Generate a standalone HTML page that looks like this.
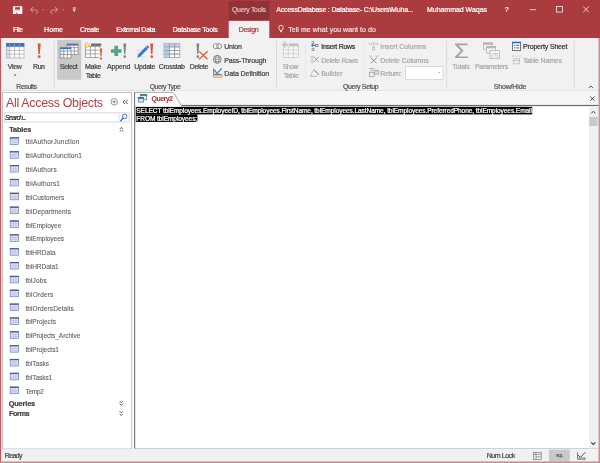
<!DOCTYPE html>
<html><head><meta charset="utf-8"><title>Access - Query2</title>
<style>
*{box-sizing:border-box;margin:0;padding:0}
html,body{width:600px;height:463px;overflow:hidden;background:#fff}
body{font-family:"Liberation Sans",sans-serif;position:relative}
.t{position:absolute;white-space:pre;line-height:1.117;display:block;-webkit-text-stroke:0.22px}
.a{position:absolute}
svg{position:absolute;left:0;top:0}
</style></head><body>
<svg width="600" height="463" viewBox="0 0 600 463">
<rect x="0" y="0" width="600" height="463" fill="#ffffff"/>
<rect x="0" y="0" width="600" height="38.2" fill="#aa3c40"/>
<rect x="228.7" y="1" width="40.6" height="20" fill="#8e3338"/>
<rect x="0" y="38" width="600" height="52.3" fill="#f1f1f1"/>
<rect x="228.7" y="20.8" width="40.6" height="17.7" fill="#f1f1f1"/>
<rect x="0" y="90" width="600" height="0.8" fill="#d9d9d9"/>
<rect x="57.2" y="39.8" width="24" height="40" fill="#c9c9c9"/>
<rect x="2.5" y="92.4" width="129.2" height="356.6" fill="#ffffff" stroke="#b4b4b4" stroke-width="0.8"/>
<rect x="4.6" y="112.8" width="124.6" height="9.2" fill="#ffffff" stroke="#d0d0d0" stroke-width="0.8"/>
<rect x="118.8" y="113.4" width="0.7" height="8" fill="#d8d8d8"/>
<rect x="134.2" y="90.8" width="464.5" height="14.2" fill="#f6f6f6"/>
<rect x="134.1" y="92.2" width="1.1" height="356.7" fill="#6e6e6e"/>
<rect x="135.2" y="104.9" width="463.5" height="1.2" fill="#6a6a6a"/>
<rect x="134.2" y="448.2" width="464.5" height="0.8" fill="#c4c4c4"/>
<rect x="135.8" y="106.8" width="396.4" height="7.6" fill="#000"/>
<rect x="135.8" y="114.3" width="61.6" height="7.6" fill="#000"/>
<rect x="589" y="106.3" width="9" height="342" fill="#f0f0f0"/>
<rect x="589.3" y="116.8" width="8.3" height="9.2" fill="#c9c9c9"/>
<rect x="405.6" y="66.6" width="37.4" height="12.8" fill="#ffffff" stroke="#d2d2d2" stroke-width="0.8"/>
<rect x="0" y="449.2" width="600" height="13" fill="#f1f1f1"/>
<rect x="549" y="449.6" width="20.7" height="12" fill="#c9c9c9"/>
<rect x="0" y="38" width="1" height="425" fill="#b85c60"/>
<rect x="1" y="38" width="0.5" height="425" fill="#ecd0d1"/>
<rect x="598.5" y="38" width="1.5" height="425" fill="#cd8c8f"/>
<rect x="0" y="461.5" width="600" height="1.5" fill="#cb8a8d"/>
<rect x="53.800000000000004" y="40.5" width="0.8" height="47.3" fill="#d6d6d6"/>
<rect x="276.20000000000005" y="40.5" width="0.8" height="47.3" fill="#d6d6d6"/>
<rect x="446.3" y="40.5" width="0.8" height="47.3" fill="#d6d6d6"/>
<rect x="573.8000000000001" y="40.5" width="0.8" height="47.3" fill="#d6d6d6"/>
<rect x="305.20000000000005" y="41" width="0.8" height="37" fill="#e7e7e7"/>
<rect x="363.8" y="41" width="0.8" height="37" fill="#e7e7e7"/>
<rect x="12.9" y="6.3" width="9.4" height="7.8" rx="0.6" fill="#fff"/><rect x="15.1" y="7.2" width="5" height="2.4" fill="#a83a3e"/><rect x="14" y="10.4" width="7.2" height="0.7" fill="#e6c4c5"/><rect x="16.2" y="12.6" width="1" height="1.5" fill="#a83a3e"/>
<g fill="none" stroke="#c98d8f" stroke-width="1.05" stroke-linecap="round" stroke-linejoin="round"><path d="M33 7.2l-2.5 2.5 2.6 2.2"/><path d="M30.9 9.7h3.6q2.9 0 2.9 2.3 0 1.1-1.2 1.6"/></g>
<g fill="none" stroke="#c98d8f" stroke-width="1.05" stroke-linecap="round" stroke-linejoin="round"><path d="M55.2 7.2l2.5 2.5-2.6 2.2"/><path d="M57.3 9.7h-3.6q-2.9 0-2.9 2.3 0 1.1 1.2 1.6"/></g>
<path d="M42.2 9.3h2.2l-1.1 1.4z" fill="#c98d8f"/><path d="M62.5 9.3h2.2l-1.1 1.4z" fill="#c98d8f"/>
<path d="M72.8 7.6h2.9v0.9h-2.9zM72.8 9.6h2.9l-1.45 2.4z" fill="#fff"/>
<rect x="530" y="9.3" width="5.8" height="0.85" fill="#f6e4e4"/>
<rect x="556.5" y="6.5" width="6" height="5.6" fill="none" stroke="#f6e4e4" stroke-width="0.85"/>
<path d="M583.2 6.5l5.6 5.7M588.8 6.5l-5.6 5.7" stroke="#f6e4e4" stroke-width="0.85" fill="none"/>
<g fill="none" stroke="#fff" stroke-width="0.8"><path d="M279.9 30.4c0-1.2-1.2-1.4-1.2-2.8a2.3 2.3 0 0 1 4.6 0c0 1.4-1.2 1.6-1.2 2.8z"/><path d="M280 31.6h2.1" stroke-width="0.9"/></g>
<rect x="6.4" y="43.3" width="17.6" height="14.700000000000003" fill="#fff"/><rect x="6.4" y="43.3" width="3.5" height="14.700000000000003" fill="#dfe6ee"/><path d="M9.9 46.599999999999994V58M14.6 46.599999999999994V58M19.3 46.599999999999994V58M6.4 46.6H24M6.4 50.4H24M6.4 54.2H24" stroke="#9a9a9a" stroke-width="0.6" fill="none"/><rect x="6.4" y="43.3" width="17.6" height="14.700000000000003" fill="none" stroke="#9a9a9a" stroke-width="0.6"/>
<rect x="6.1" y="43" width="18.2" height="3.6" fill="#3f73b4"/>
<path d="M9.9 43.6v2.4M14.6 43.6v2.4M19.3 43.6v2.4" stroke="#9bb9dd" stroke-width="0.7"/>
<path d="M13.8 74.6h2.6l-1.3 1.6z" fill="#555"/>
<path d="M37.6 43.5h3.1l-0.8680000000000001 10.439h-1.364z" fill="#d9583a"/><rect x="37.848" y="55.369" width="2.604" height="2.4310000000000005" fill="#d9583a"/>
<rect x="66.9" y="43.9" width="11.099999999999994" height="10.600000000000001" fill="#fff"/><rect x="66.9" y="43.9" width="3.6999999999999886" height="10.600000000000001" fill="#e6ebf2"/><rect x="66.9" y="43.9" width="11.099999999999994" height="1.7" fill="#3f73b4"/><path d="M70.6 45.6V54.5M74.3 45.6V54.5M66.9 47.6H78M66.9 51H78" stroke="#808080" stroke-width="0.7" fill="none"/><rect x="66.9" y="43.9" width="11.099999999999994" height="10.600000000000001" fill="none" stroke="#808080" stroke-width="0.7"/>
<rect x="60.1" y="47.3" width="10.899999999999999" height="10.700000000000003" fill="#fff"/><rect x="60.1" y="47.3" width="3.6999999999999957" height="10.700000000000003" fill="#e6ebf2"/><rect x="60.1" y="47.3" width="10.899999999999999" height="1.8" fill="#3f73b4"/><path d="M63.8 49.099999999999994V58M67.4 49.099999999999994V58M60.1 51H71M60.1 54.5H71" stroke="#808080" stroke-width="0.7" fill="none"/><rect x="60.1" y="47.3" width="10.899999999999999" height="10.700000000000003" fill="none" stroke="#808080" stroke-width="0.7"/>
<rect x="85.6" y="46.6" width="14.400000000000006" height="10.899999999999999" fill="#fff"/><path d="M90.4 46.6V57.5M95.2 46.6V57.5M85.6 50.2H100M85.6 53.9H100" stroke="#858585" stroke-width="0.7" fill="none"/><rect x="85.6" y="46.6" width="14.400000000000006" height="10.899999999999999" fill="none" stroke="#858585" stroke-width="0.7"/>
<rect x="91" y="43.5" width="10.2" height="2.4" fill="#6f6f6f"/>
<g stroke="#eebf3c" stroke-width="0.9"><path d="M87.1 42.4v5.8M84.2 45.3h5.8M85 43.2l4.2 4.2M89.2 43.2l-4.2 4.2"/></g><circle cx="87.1" cy="45.3" r="1.7" fill="#fbe9a6" stroke="#eebf3c" stroke-width="0.6"/>
<rect x="99.2" y="48" width="3.4" height="12" fill="#f1f1f1"/>
<path d="M99.9 48.6h2.3l-0.644 7.957h-1.012z" fill="#d9583a"/><rect x="100.08400000000002" y="57.647000000000006" width="1.9319999999999997" height="1.8530000000000002" fill="#d9583a"/>
<path d="M114.4 45.8h3.6v3.4h3.5v3.5h-3.5v3.4h-3.6v-3.4h-3.5v-3.5h3.5z" fill="#4ea58c"/>
<path d="M123.3 43.5h2.9l-0.812 10.439h-1.276z" fill="#858585"/><rect x="123.532" y="55.369" width="2.436" height="2.4310000000000005" fill="#858585"/>
<path d="M136.6 50.2h7M136.6 53.4h5M138 56.8h7" stroke="#cdd6e2" stroke-width="0.9"/>
<path d="M147.2 45.2l2.2 2.1-9 9.2-3.2 1.2 1-3.3z" fill="#3c78c3"/>
<path d="M145.8 46.6l2.2 2.1" stroke="#dfe9f6" stroke-width="0.6"/>
<path d="M150.2 43.5h3.0l-0.8400000000000001 10.439h-1.32z" fill="#d9583a"/><rect x="150.44" y="55.369" width="2.52" height="2.4310000000000005" fill="#d9583a"/>
<rect x="164" y="43.3" width="15.800000000000011" height="14.200000000000003" fill="#fff"/><path d="M169.5 43.3V57.5M174.6 43.3V57.5M164 46.9H179.8M164 50.5H179.8M164 54H179.8" stroke="#8b93a1" stroke-width="0.7" fill="none"/><rect x="164" y="43.3" width="15.800000000000011" height="14.200000000000003" fill="none" stroke="#8b93a1" stroke-width="0.7"/>
<rect x="164.3" y="43.6" width="5.2" height="13.6" fill="#b9cce5"/><rect x="164.3" y="43.6" width="15.2" height="3.3" fill="#b9cce5"/>
<path d="M169.5 43.3v14.2M174.6 43.3v14.2M164 46.9h15.8M164 50.5h15.8M164 54h15.8" stroke="#8b93a1" stroke-width="0.6" fill="none"/>
<path d="M196.4 43.5h2.9l-0.812 10.439h-1.276z" fill="#858585"/><rect x="196.632" y="55.369" width="2.436" height="2.4310000000000005" fill="#858585"/>
<path d="M199.2 51.4l8.3 7.8M207.6 51.2l-8.6 8.2" stroke="#d9583a" stroke-width="1.3" fill="none"/>
<g fill="#fff" stroke="#707070" stroke-width="0.75"><circle cx="215.8" cy="46.2" r="2.55"/><circle cx="219.1" cy="46.2" r="2.55" fill="none"/></g>
<g fill="none" stroke="#6a6a6a" stroke-width="0.7"><circle cx="217.3" cy="59.3" r="4" fill="#fff"/><ellipse cx="217.3" cy="59.3" rx="1.8" ry="4"/><path d="M213.3 59.3h8M214 57.2h6.6M214 61.4h6.6"/></g>
<rect x="213.3" y="75" width="8.8" height="2.3" rx="0.5" fill="#f9d9ba" stroke="#e58f45" stroke-width="0.8"/>
<path d="M213.6 68.6v6M213.6 74.4h8" stroke="#555" stroke-width="0.8" fill="none"/>
<path d="M214.2 69.6l2.8 4 4.7-5.2" stroke="#3c78c3" stroke-width="1.25" fill="none"/>
<rect x="283.3" y="46" width="15.199999999999989" height="11.5" fill="#f8f6f7"/><path d="M288.3 46V57.5M293.4 46V57.5M283.3 49.9H298.5M283.3 53.7H298.5" stroke="#c6c3c4" stroke-width="0.7" fill="none"/><rect x="283.3" y="46" width="15.199999999999989" height="11.5" fill="none" stroke="#c6c3c4" stroke-width="0.7"/>
<rect x="289" y="43.5" width="9.5" height="2.2" fill="#bdbdbd"/>
<path d="M284.9 41.5v6M282 44.5h5.8" stroke="#bdbdbd" stroke-width="1.3"/>
<g fill="none" stroke="#5a6470" stroke-width="0.7"><path d="M311.6 41.8h2.2v2h-2.2M311.6 48.4h2.2v2h-2.2"/><path d="M312 45.4h3.2" stroke="#2f6fba" stroke-width="1"/><path d="M313.3 43.9l-1.9 1.5 1.9 1.5" stroke="#2f6fba" stroke-width="0.9"/><rect x="315.6" y="44.4" width="2.4" height="2.1"/></g>
<g fill="none" stroke="#b9b9b9" stroke-width="0.8"><path d="M310.6 56.4h2.3v2h-2.3M310.6 60.4h2.3v2h-2.3"/><path d="M314 56.7l4.8 5.4M318.8 56.7l-4.8 5.4" stroke-width="1" stroke="#a2a2a2"/></g>
<g fill="none" stroke="#b2b2b2" stroke-width="0.8"><path d="M313.4 69.4l5.6 5.4" stroke-width="1.3" stroke="#a4a4a4"/><path d="M312.7 70.7l-2 5.6h6" /><path d="M311 76.4h7" stroke-dasharray="1 0.8"/></g>
<g fill="none" stroke="#bcbcbc" stroke-width="0.75"><path d="M369.4 42.6v2h2v-2M376 42.6v2h2v-2"/><path d="M373.7 42v5.6M372.3 43.6l1.4-1.6 1.4 1.6"/><rect x="372.7" y="47.6" width="2" height="2.6"/></g>
<g fill="none" stroke="#bcbcbc" stroke-width="0.75"><path d="M369.6 55.2v1.6h2v-1.6M376 55.2v1.6h2v-1.6"/><path d="M370.8 57.8l5.8 5.4M376.6 57.8l-5.8 5.4" stroke-width="1" stroke="#8c8c8c"/></g>
<g fill="none" stroke="#9c9c9c" stroke-width="0.75"><path d="M369.3 68.6h5.2M370.4 69.6l1.5 1.7 1.5-1.7" /><rect x="369.5" y="72.3" width="4.6" height="4.4"/><rect x="374.6" y="70.3" width="3.8" height="3.8"/><path d="M375.6 71.5h1.8M375.6 72.9h1.8" stroke-width="0.5"/></g>
<path d="M438 71.9h2.4l-1.2 1.5z" fill="#b5b5b5"/>
<path d="M455 43.6h12.6v1.7h-9.3l5.2 5.5-5.4 5.6h9.8v1.7H455v-1.3l5.9-6-5.9-6.1z" fill="#a3a3a3"/>
<g fill="#f4f4f4" stroke="#b4b4b4" stroke-width="0.8"><rect x="483.4" y="43" width="8.8" height="6.4"/><rect x="483.4" y="43" width="8.8" height="1.3" fill="#b4b4b4"/><rect x="486.6" y="46.6" width="8.8" height="6.4"/><rect x="486.6" y="46.6" width="8.8" height="1.3" fill="#b4b4b4"/><rect x="490" y="50.6" width="9.4" height="8"/></g>
<text x="494.7" y="57.3" font-family="Liberation Sans, sans-serif" font-size="5.6" fill="#adadad" text-anchor="middle">[?]</text>
<rect x="512.4" y="42.3" width="8.2" height="8.2" fill="#fff" stroke="#555" stroke-width="0.8"/><rect x="512" y="41.8" width="9" height="1.5" fill="#2f6fba"/><path d="M514 45.3h1.4M516.4 45.3h2.8M514 47.9h1.4M516.4 47.9h2.8" stroke="#444" stroke-width="0.9"/>
<g fill="none" stroke="#bdbdbd" stroke-width="0.8"><rect x="513.6" y="58.8" width="6" height="5"/><path d="M513.6 60.6h6" /><path d="M512.3 55.3l1.4 1.6M513.7 55.3l-1.4 1.6M515.8 55.3l1.4 1.6M517.2 55.3l-1.4 1.6M519.3 55.3l1.4 1.6M520.7 55.3l-1.4 1.6" stroke-width="0.6"/></g>
<path d="M588.9 88l2-2.1 2 2.1" stroke="#555" stroke-width="1" fill="none"/>
<circle cx="114.2" cy="101.8" r="3.25" fill="#f0f0f0" stroke="#808080" stroke-width="0.75"/><path d="M112.6 101.2h3.2l-1.6 1.9z" fill="#555"/>
<path d="M125 99.8l-1.9 2.1 1.9 2.1M127.6 99.8l-1.9 2.1 1.9 2.1" stroke="#444" stroke-width="0.95" fill="none"/>
<circle cx="124.7" cy="116.4" r="2.3" fill="#eaf1fb" stroke="#3b6fc0" stroke-width="0.9"/><path d="M123 118.3l-2.3 2.5" stroke="#3b6fc0" stroke-width="1.3" stroke-linecap="round"/>
<path d="M119.9 129l1.6-1.7 1.6 1.7M119.9 131.6l1.6-1.7 1.6 1.7" stroke="#444" stroke-width="0.85" fill="none"/>
<path d="M119.7 401.0l1.6 1.7 1.6-1.7M119.7 403.6l1.6 1.7 1.6-1.7" stroke="#444" stroke-width="0.85" fill="none"/>
<path d="M119.7 411.2l1.6 1.7 1.6-1.7M119.7 413.8l1.6 1.7 1.6-1.7" stroke="#444" stroke-width="0.85" fill="none"/>
<rect x="10.2" y="137.70" width="8.3" height="6.7" fill="#e3ebf8" stroke="#6c7cad" stroke-width="0.7"/><rect x="9.85" y="137.35" width="9" height="1.3" fill="#4c5b90"/><path d="M13 138.70v5.4M15.8 138.70v5.4" stroke="#a3b3d8" stroke-width="0.55"/><path d="M10.5 140.60h7.7M10.5 142.50h7.7" stroke="#a3b3d8" stroke-width="0.55"/>
<rect x="10.2" y="151.55" width="8.3" height="6.7" fill="#e3ebf8" stroke="#6c7cad" stroke-width="0.7"/><rect x="9.85" y="151.20" width="9" height="1.3" fill="#4c5b90"/><path d="M13 152.55v5.4M15.8 152.55v5.4" stroke="#a3b3d8" stroke-width="0.55"/><path d="M10.5 154.45h7.7M10.5 156.35h7.7" stroke="#a3b3d8" stroke-width="0.55"/>
<rect x="10.2" y="165.40" width="8.3" height="6.7" fill="#e3ebf8" stroke="#6c7cad" stroke-width="0.7"/><rect x="9.85" y="165.05" width="9" height="1.3" fill="#4c5b90"/><path d="M13 166.40v5.4M15.8 166.40v5.4" stroke="#a3b3d8" stroke-width="0.55"/><path d="M10.5 168.30h7.7M10.5 170.20h7.7" stroke="#a3b3d8" stroke-width="0.55"/>
<rect x="10.2" y="179.25" width="8.3" height="6.7" fill="#e3ebf8" stroke="#6c7cad" stroke-width="0.7"/><rect x="9.85" y="178.90" width="9" height="1.3" fill="#4c5b90"/><path d="M13 180.25v5.4M15.8 180.25v5.4" stroke="#a3b3d8" stroke-width="0.55"/><path d="M10.5 182.15h7.7M10.5 184.05h7.7" stroke="#a3b3d8" stroke-width="0.55"/>
<rect x="10.2" y="193.10" width="8.3" height="6.7" fill="#e3ebf8" stroke="#6c7cad" stroke-width="0.7"/><rect x="9.85" y="192.75" width="9" height="1.3" fill="#4c5b90"/><path d="M13 194.10v5.4M15.8 194.10v5.4" stroke="#a3b3d8" stroke-width="0.55"/><path d="M10.5 196.00h7.7M10.5 197.90h7.7" stroke="#a3b3d8" stroke-width="0.55"/>
<rect x="10.2" y="206.95" width="8.3" height="6.7" fill="#e3ebf8" stroke="#6c7cad" stroke-width="0.7"/><rect x="9.85" y="206.60" width="9" height="1.3" fill="#4c5b90"/><path d="M13 207.95v5.4M15.8 207.95v5.4" stroke="#a3b3d8" stroke-width="0.55"/><path d="M10.5 209.85h7.7M10.5 211.75h7.7" stroke="#a3b3d8" stroke-width="0.55"/>
<rect x="10.2" y="220.80" width="8.3" height="6.7" fill="#e3ebf8" stroke="#6c7cad" stroke-width="0.7"/><rect x="9.85" y="220.45" width="9" height="1.3" fill="#4c5b90"/><path d="M13 221.80v5.4M15.8 221.80v5.4" stroke="#a3b3d8" stroke-width="0.55"/><path d="M10.5 223.70h7.7M10.5 225.60h7.7" stroke="#a3b3d8" stroke-width="0.55"/>
<rect x="10.2" y="234.65" width="8.3" height="6.7" fill="#e3ebf8" stroke="#6c7cad" stroke-width="0.7"/><rect x="9.85" y="234.30" width="9" height="1.3" fill="#4c5b90"/><path d="M13 235.65v5.4M15.8 235.65v5.4" stroke="#a3b3d8" stroke-width="0.55"/><path d="M10.5 237.55h7.7M10.5 239.45h7.7" stroke="#a3b3d8" stroke-width="0.55"/>
<rect x="10.2" y="248.50" width="8.3" height="6.7" fill="#e3ebf8" stroke="#6c7cad" stroke-width="0.7"/><rect x="9.85" y="248.15" width="9" height="1.3" fill="#4c5b90"/><path d="M13 249.50v5.4M15.8 249.50v5.4" stroke="#a3b3d8" stroke-width="0.55"/><path d="M10.5 251.40h7.7M10.5 253.30h7.7" stroke="#a3b3d8" stroke-width="0.55"/>
<rect x="10.2" y="262.35" width="8.3" height="6.7" fill="#e3ebf8" stroke="#6c7cad" stroke-width="0.7"/><rect x="9.85" y="262.00" width="9" height="1.3" fill="#4c5b90"/><path d="M13 263.35v5.4M15.8 263.35v5.4" stroke="#a3b3d8" stroke-width="0.55"/><path d="M10.5 265.25h7.7M10.5 267.15h7.7" stroke="#a3b3d8" stroke-width="0.55"/>
<rect x="10.2" y="276.20" width="8.3" height="6.7" fill="#e3ebf8" stroke="#6c7cad" stroke-width="0.7"/><rect x="9.85" y="275.85" width="9" height="1.3" fill="#4c5b90"/><path d="M13 277.20v5.4M15.8 277.20v5.4" stroke="#a3b3d8" stroke-width="0.55"/><path d="M10.5 279.10h7.7M10.5 281.00h7.7" stroke="#a3b3d8" stroke-width="0.55"/>
<rect x="10.2" y="290.05" width="8.3" height="6.7" fill="#e3ebf8" stroke="#6c7cad" stroke-width="0.7"/><rect x="9.85" y="289.70" width="9" height="1.3" fill="#4c5b90"/><path d="M13 291.05v5.4M15.8 291.05v5.4" stroke="#a3b3d8" stroke-width="0.55"/><path d="M10.5 292.95h7.7M10.5 294.85h7.7" stroke="#a3b3d8" stroke-width="0.55"/>
<rect x="10.2" y="303.90" width="8.3" height="6.7" fill="#e3ebf8" stroke="#6c7cad" stroke-width="0.7"/><rect x="9.85" y="303.55" width="9" height="1.3" fill="#4c5b90"/><path d="M13 304.90v5.4M15.8 304.90v5.4" stroke="#a3b3d8" stroke-width="0.55"/><path d="M10.5 306.80h7.7M10.5 308.70h7.7" stroke="#a3b3d8" stroke-width="0.55"/>
<rect x="10.2" y="317.75" width="8.3" height="6.7" fill="#e3ebf8" stroke="#6c7cad" stroke-width="0.7"/><rect x="9.85" y="317.40" width="9" height="1.3" fill="#4c5b90"/><path d="M13 318.75v5.4M15.8 318.75v5.4" stroke="#a3b3d8" stroke-width="0.55"/><path d="M10.5 320.65h7.7M10.5 322.55h7.7" stroke="#a3b3d8" stroke-width="0.55"/>
<rect x="10.2" y="331.60" width="8.3" height="6.7" fill="#e3ebf8" stroke="#6c7cad" stroke-width="0.7"/><rect x="9.85" y="331.25" width="9" height="1.3" fill="#4c5b90"/><path d="M13 332.60v5.4M15.8 332.60v5.4" stroke="#a3b3d8" stroke-width="0.55"/><path d="M10.5 334.50h7.7M10.5 336.40h7.7" stroke="#a3b3d8" stroke-width="0.55"/>
<rect x="10.2" y="345.45" width="8.3" height="6.7" fill="#e3ebf8" stroke="#6c7cad" stroke-width="0.7"/><rect x="9.85" y="345.10" width="9" height="1.3" fill="#4c5b90"/><path d="M13 346.45v5.4M15.8 346.45v5.4" stroke="#a3b3d8" stroke-width="0.55"/><path d="M10.5 348.35h7.7M10.5 350.25h7.7" stroke="#a3b3d8" stroke-width="0.55"/>
<rect x="10.2" y="359.30" width="8.3" height="6.7" fill="#e3ebf8" stroke="#6c7cad" stroke-width="0.7"/><rect x="9.85" y="358.95" width="9" height="1.3" fill="#4c5b90"/><path d="M13 360.30v5.4M15.8 360.30v5.4" stroke="#a3b3d8" stroke-width="0.55"/><path d="M10.5 362.20h7.7M10.5 364.10h7.7" stroke="#a3b3d8" stroke-width="0.55"/>
<rect x="10.2" y="373.15" width="8.3" height="6.7" fill="#e3ebf8" stroke="#6c7cad" stroke-width="0.7"/><rect x="9.85" y="372.80" width="9" height="1.3" fill="#4c5b90"/><path d="M13 374.15v5.4M15.8 374.15v5.4" stroke="#a3b3d8" stroke-width="0.55"/><path d="M10.5 376.05h7.7M10.5 377.95h7.7" stroke="#a3b3d8" stroke-width="0.55"/>
<rect x="10.2" y="387.00" width="8.3" height="6.7" fill="#e3ebf8" stroke="#6c7cad" stroke-width="0.7"/><rect x="9.85" y="386.65" width="9" height="1.3" fill="#4c5b90"/><path d="M13 388.00v5.4M15.8 388.00v5.4" stroke="#a3b3d8" stroke-width="0.55"/><path d="M10.5 389.90h7.7M10.5 391.80h7.7" stroke="#a3b3d8" stroke-width="0.55"/>
<path d="M135.3 105.8V92.5h36.5q1.7 0 2.5 1.4l6.9 11.9z" fill="#fff"/><path d="M134.8 92.45h37q1.7 0 2.5 1.4l6.9 11.6" fill="none" stroke="#8c8c8c" stroke-width="0.7"/>
<rect x="135.6" y="105" width="45.6" height="1.6" fill="#fff"/>
<g fill="#eaf3f8" stroke="#3f7787" stroke-width="0.7"><rect x="140.8" y="94.6" width="5.9" height="5.2"/><rect x="140.8" y="94.6" width="5.9" height="1.1" fill="#3f7787"/><rect x="138.2" y="97.4" width="5.4" height="4.7" fill="#d5e6f2"/><rect x="138.2" y="97.4" width="5.4" height="1.2" fill="#2f5f70"/></g>
<path d="M590.2 96.5l4.3 4.3M594.5 96.5l-4.3 4.3" stroke="#333" stroke-width="0.9" fill="none"/>
<path d="M591.4 113.4l2-2.2 2 2.2" stroke="#444" stroke-width="1" fill="none"/>
<path d="M591.3 442.3l2 2.2 2-2.2" stroke="#333" stroke-width="1.1" fill="none"/>
<g fill="none" stroke="#7a7a7a" stroke-width="0.7"><rect x="533.6" y="452.3" width="7.6" height="7.2"/><path d="M533.6 454.4h7.6M536 452.3v7.2M536 456.9h5.2"/></g>
<g fill="none" stroke="#555" stroke-width="0.8"><path d="M577.6 452.4v6.8h8"/><path d="M578 455l2.4 2.4 5-5.2" stroke-width="1"/><path d="M579.4 459.2v-1.4h5.6v1.4" stroke-width="0.6"/></g>
</svg>
<div class="a" id="txt" style="left:0;top:0;width:600px;height:463px;will-change:transform">
<span class="t" style="left:232px;top:6.17px;font-size:7px;color:#e3bfc0;letter-spacing:-0.323px;">Query Tools</span>
<span class="t" style="left:276.3px;top:6.17px;font-size:7px;color:#fff;letter-spacing:-0.193px;">AccessDatabase : Database- C:\Users\Muha...</span>
<span class="t" style="left:427px;top:6.17px;font-size:7px;color:#fff;letter-spacing:-0.034px;">Muhammad Waqas</span>
<span class="t" style="left:504.7px;top:5.86px;font-size:7px;color:#fff;letter-spacing:0px;">?</span>
<span class="t" style="left:13px;top:25.87px;font-size:7px;color:#fff;letter-spacing:-0.427px;">File</span>
<span class="t" style="left:44px;top:25.87px;font-size:7px;color:#fff;letter-spacing:0.104px;">Home</span>
<span class="t" style="left:80px;top:25.87px;font-size:7px;color:#fff;letter-spacing:-0.303px;">Create</span>
<span class="t" style="left:116.3px;top:25.87px;font-size:7px;color:#fff;letter-spacing:-0.285px;">External Data</span>
<span class="t" style="left:172.7px;top:25.87px;font-size:7px;color:#fff;letter-spacing:-0.24px;">Database Tools</span>
<span class="t" style="left:238.7px;top:25.87px;font-size:7px;color:#aa3c40;letter-spacing:-0.359px;">Design</span>
<span class="t" style="left:288.3px;top:25.87px;font-size:7px;color:#f2dada;letter-spacing:0.043px;">Tell me what you want to do</span>
<span class="t" style="left:7.8px;top:62.76px;font-size:7px;color:#444444;letter-spacing:-0.349px;">View</span>
<span class="t" style="left:33px;top:62.76px;font-size:7px;color:#444444;letter-spacing:-0.422px;">Run</span>
<span class="t" style="left:60px;top:62.76px;font-size:7px;color:#444444;letter-spacing:-0.354px;">Select</span>
<span class="t" style="left:85px;top:62.76px;font-size:7px;color:#444444;letter-spacing:-0.275px;">Make</span>
<span class="t" style="left:85.8px;top:71.77px;font-size:7px;color:#444444;letter-spacing:-0.434px;">Table</span>
<span class="t" style="left:107px;top:62.76px;font-size:7px;color:#444444;letter-spacing:-0.168px;">Append</span>
<span class="t" style="left:134.2px;top:62.76px;font-size:7px;color:#444444;letter-spacing:-0.296px;">Update</span>
<span class="t" style="left:158.7px;top:62.76px;font-size:7px;color:#444444;letter-spacing:-0.245px;">Crosstab</span>
<span class="t" style="left:189.7px;top:62.76px;font-size:7px;color:#444444;letter-spacing:-0.327px;">Delete</span>
<span class="t" style="left:282.7px;top:62.76px;font-size:7px;color:#a9a9a9;letter-spacing:-0.539px;">Show</span>
<span class="t" style="left:283.8px;top:71.77px;font-size:7px;color:#a9a9a9;letter-spacing:-0.434px;">Table</span>
<span class="t" style="left:452.5px;top:62.76px;font-size:7px;color:#a9a9a9;letter-spacing:-0.219px;">Totals</span>
<span class="t" style="left:475px;top:62.76px;font-size:7px;color:#a9a9a9;letter-spacing:-0.321px;">Parameters</span>
<span class="t" style="left:224.2px;top:42.56px;font-size:7px;color:#444444;letter-spacing:-0.124px;">Union</span>
<span class="t" style="left:224.2px;top:56.66px;font-size:7px;color:#444444;letter-spacing:-0.17px;">Pass-Through</span>
<span class="t" style="left:224.2px;top:69.67px;font-size:7px;color:#444444;letter-spacing:-0.066px;">Data Definition</span>
<span class="t" style="left:321.3px;top:42.56px;font-size:7px;color:#333;letter-spacing:-0.297px;">Insert Rows</span>
<span class="t" style="left:321.3px;top:56.66px;font-size:7px;color:#a9a9a9;letter-spacing:-0.299px;">Delete Rows</span>
<span class="t" style="left:321.3px;top:69.67px;font-size:7px;color:#a9a9a9;letter-spacing:-0.099px;">Builder</span>
<span class="t" style="left:380.3px;top:42.56px;font-size:7px;color:#a9a9a9;letter-spacing:-0.083px;">Insert Columns</span>
<span class="t" style="left:380.3px;top:56.66px;font-size:7px;color:#a9a9a9;letter-spacing:-0.109px;">Delete Columns</span>
<span class="t" style="left:380.3px;top:69.67px;font-size:7px;color:#a9a9a9;letter-spacing:-0.261px;">Return:</span>
<span class="t" style="left:523px;top:42.56px;font-size:7px;color:#333;letter-spacing:-0.169px;">Property Sheet</span>
<span class="t" style="left:523px;top:56.66px;font-size:7px;color:#a9a9a9;letter-spacing:-0.186px;">Table Names</span>
<span class="t" style="left:16.3px;top:82.77px;font-size:7px;color:#555;letter-spacing:-0.441px;">Results</span>
<span class="t" style="left:149.7px;top:82.77px;font-size:7px;color:#555;letter-spacing:-0.551px;">Query Type</span>
<span class="t" style="left:343px;top:82.77px;font-size:7px;color:#555;letter-spacing:-0.361px;">Query Setup</span>
<span class="t" style="left:493.7px;top:82.77px;font-size:7px;color:#555;letter-spacing:-0.157px;">Show/Hide</span>
<span class="t" style="left:6px;top:96.58px;font-size:12.4px;color:#ac4246;-webkit-text-stroke:0px;letter-spacing:-0.29px;">All Access Objects</span>
<span class="t" style="left:5px;top:113.65px;font-size:6.8px;color:#333;font-style:italic;letter-spacing:-0.688px;">Search...</span>
<span class="t" style="left:9.2px;top:125.6px;font-size:7.4px;color:#444;font-weight:bold;letter-spacing:-0.155px;">Tables</span>
<span class="t" style="left:25.4px;top:138.42px;font-size:6.5px;color:#5a5a5a;-webkit-text-stroke:0.08px;letter-spacing:0.229px;">tblAuthorJunction</span>
<span class="t" style="left:25.4px;top:152.27px;font-size:6.5px;color:#5a5a5a;-webkit-text-stroke:0.08px;letter-spacing:0.162px;">tblAuthorJunction1</span>
<span class="t" style="left:25.4px;top:166.12px;font-size:6.5px;color:#5a5a5a;-webkit-text-stroke:0.08px;letter-spacing:0.224px;">tblAuthors</span>
<span class="t" style="left:25.4px;top:179.97px;font-size:6.5px;color:#5a5a5a;-webkit-text-stroke:0.08px;letter-spacing:0.171px;">tblAuthors1</span>
<span class="t" style="left:25.4px;top:193.82px;font-size:6.5px;color:#5a5a5a;-webkit-text-stroke:0.08px;letter-spacing:0.055px;">tblCustomers</span>
<span class="t" style="left:25.4px;top:207.67px;font-size:6.5px;color:#5a5a5a;-webkit-text-stroke:0.08px;letter-spacing:0.117px;">tblDepartments</span>
<span class="t" style="left:25.4px;top:221.52px;font-size:6.5px;color:#5a5a5a;-webkit-text-stroke:0.08px;letter-spacing:0.012px;">tblEmployee</span>
<span class="t" style="left:25.4px;top:235.37px;font-size:6.5px;color:#5a5a5a;-webkit-text-stroke:0.08px;letter-spacing:-0.039px;">tblEmployees</span>
<span class="t" style="left:25.4px;top:249.22px;font-size:6.5px;color:#5a5a5a;-webkit-text-stroke:0.08px;letter-spacing:0.039px;">tblHRData</span>
<span class="t" style="left:25.4px;top:263.07px;font-size:6.5px;color:#5a5a5a;-webkit-text-stroke:0.08px;letter-spacing:-0.034px;">tblHRData1</span>
<span class="t" style="left:25.4px;top:276.92px;font-size:6.5px;color:#5a5a5a;-webkit-text-stroke:0.08px;letter-spacing:0.115px;">tblJobs</span>
<span class="t" style="left:25.4px;top:290.77px;font-size:6.5px;color:#5a5a5a;-webkit-text-stroke:0.08px;letter-spacing:0.146px;">tblOrders</span>
<span class="t" style="left:25.4px;top:304.62px;font-size:6.5px;color:#5a5a5a;-webkit-text-stroke:0.08px;letter-spacing:0.113px;">tblOrdersDetails</span>
<span class="t" style="left:25.4px;top:318.47px;font-size:6.5px;color:#5a5a5a;-webkit-text-stroke:0.08px;letter-spacing:0.024px;">tblProjects</span>
<span class="t" style="left:25.4px;top:332.32px;font-size:6.5px;color:#5a5a5a;-webkit-text-stroke:0.08px;letter-spacing:-0.041px;">tblProjects_Archive</span>
<span class="t" style="left:25.4px;top:346.17px;font-size:6.5px;color:#5a5a5a;-webkit-text-stroke:0.08px;letter-spacing:-0.034px;">tblProjects1</span>
<span class="t" style="left:25.4px;top:360.02px;font-size:6.5px;color:#5a5a5a;-webkit-text-stroke:0.08px;letter-spacing:0.017px;">tblTasks</span>
<span class="t" style="left:25.4px;top:373.87px;font-size:6.5px;color:#5a5a5a;-webkit-text-stroke:0.08px;letter-spacing:-0.026px;">tblTasks1</span>
<span class="t" style="left:25.4px;top:387.72px;font-size:6.5px;color:#5a5a5a;-webkit-text-stroke:0.08px;letter-spacing:-0.229px;">Temp2</span>
<span class="t" style="left:8.7px;top:399.5px;font-size:7.4px;color:#444;font-weight:bold;letter-spacing:-0.172px;">Queries</span>
<span class="t" style="left:8.9px;top:409.6px;font-size:7.4px;color:#444;font-weight:bold;letter-spacing:-0.448px;">Forms</span>
<span class="t" style="left:151.6px;top:94.87px;font-size:7px;color:#a93a40;font-weight:bold;-webkit-text-stroke:0.1px;letter-spacing:-0.545px;">Query2</span>
<span class="t" style="left:136.3px;top:107.43px;font-size:6.6px;color:#fff;letter-spacing:-0.103px;">SELECT tblEmployees.EmployeeID, tblEmployees.FirstName, tblEmployees.LastName, tblEmployees.PreferredPhone, tblEmployees.Email</span>
<span class="t" style="left:136.3px;top:114.93px;font-size:6.6px;color:#fff;letter-spacing:-0.104px;">FROM tblEmployees;</span>
<span class="t" style="left:4.7px;top:452.47px;font-size:7px;color:#444;letter-spacing:-0.609px;">Ready</span>
<span class="t" style="left:486.7px;top:452.47px;font-size:7px;color:#444;letter-spacing:-0.417px;">Num Lock</span>
<span class="t" style="left:556px;top:453.8px;font-size:4.2px;color:#555;letter-spacing:-0.545px;">SQL</span>
</div>
</body></html>
